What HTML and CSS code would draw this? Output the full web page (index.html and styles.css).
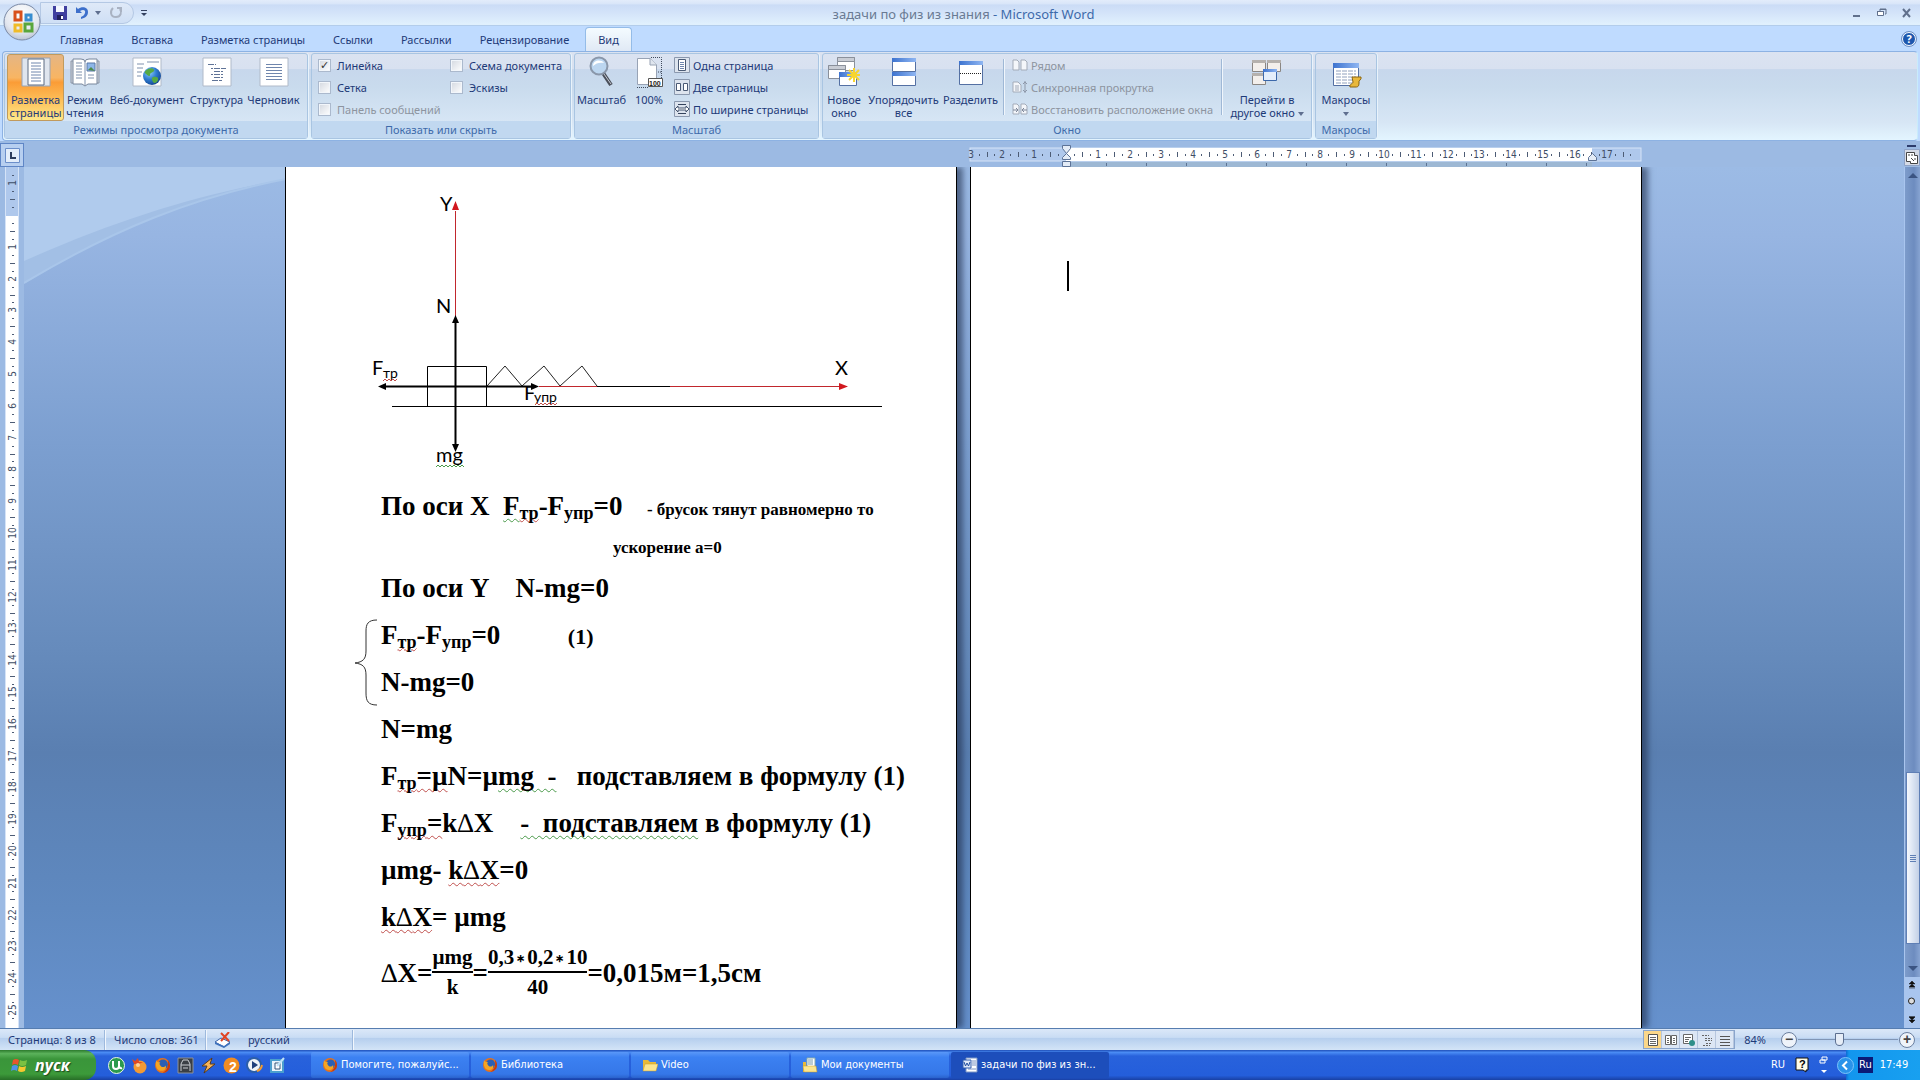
FILE: index.html
```html
<!DOCTYPE html>
<html lang="ru">
<head>
<meta charset="utf-8">
<title>задачи по физ из знания - Microsoft Word</title>
<link rel="stylesheet" href="styles.css">
</head>
<body>
<svg class="defs" aria-hidden="true">
  <defs>
    <linearGradient id="blueBar" x1="0" y1="0" x2="1" y2="0"><stop offset="0" stop-color="#3d73cf"/><stop offset="1" stop-color="#8fb6f2"/></linearGradient>
    <radialGradient id="globe" cx=".35" cy=".3" r=".8"><stop offset="0" stop-color="#8fd0ff"/><stop offset=".5" stop-color="#2d7ad0"/><stop offset="1" stop-color="#123f86"/></radialGradient>
    <radialGradient id="orb" cx=".5" cy=".3" r=".8"><stop offset="0" stop-color="#fff"/><stop offset=".6" stop-color="#e3e7ef"/><stop offset="1" stop-color="#a9b4c8"/></radialGradient>
    <symbol id="firefox" viewBox="0 0 16 16"><circle cx="8" cy="8" r="7" fill="#e8731a"/><circle cx="8.500" cy="7" r="4.600" fill="#2b5fb4"/><path d="M2 3c1 2 2 2 4 2-1 1-1 2 0 3 1 2 4 2 5 0 1 3-1 5-4 5-4 0-6-4-5-10z" fill="#f5a623"/><path d="M13 3c2 2 3 6 1 9-2 2-4 3-6 3 4-2 6-6 5-12z" fill="#c43b12"/></symbol>
    <symbol id="page-pair" viewBox="0 0 16 12"><path d="M1 1h4l2 2v8H1zM9 1h4l2 2v8H9z" fill="#f4f6fa" stroke="#a3abb8"/></symbol>
  </defs>
</svg>

<div class="app">
  <header class="titlebar">
    <button class="office" aria-label="Office">
      <svg viewBox="0 0 38 42" width="38" height="42"><circle cx="19" cy="21" r="18" fill="url(#orb)" stroke="#7b8aa6"/><g fill="none" stroke-width="3"><path d="M18 11h-6v8h6z" stroke="#d8501c"/><path d="M23 14h5v5h-5z" stroke="#3a8ed0"/><path d="M12 24h6v6h-6z" stroke="#f0bb28"/><path d="M22 23h7v7h-7z" stroke="#59a63b"/></g></svg>
    </button>
    <div class="quick">
      <button aria-label="Сохранить"><svg width="14" height="14" viewBox="0 0 14 14"><path d="M0 0h14v14H1l-1-1z" fill="#3f3f9f"/><path d="M3 0h8v6H3z" fill="#f4f7ff"/><path d="M4 9h6v5H4z" fill="#20205c"/><path d="M8 10h2v3H8z" fill="#fff"/></svg></button>
      <button aria-label="Отменить"><svg width="14" height="13" viewBox="0 0 14 13"><path d="M1 1v6h6L5 5c3-2 6-1 5 2-.500 2-2 3-4 4v2c4-1 7-3 7-7 0-5-6-6-10-3z" fill="#3d6fcb"/></svg></button>
      <span class="caret"></span>
      <button aria-label="Повторить"><svg width="14" height="13" viewBox="0 0 14 13"><path d="M4 2C1 5 1 11 7 11c5 0 6-5 4-8M8 2h4v4" fill="none" stroke="#a9b2c2" stroke-width="2"/></svg></button>
    </div>
    <span class="more"><i></i><b class="caret"></b></span>
    <h1><span>задачи по физ из знания</span> - Microsoft Word</h1>
    <div class="winctl">
      <button aria-label="Свернуть"><svg width="10" height="10"><path d="M1 7h7v2H1z" fill="#60708c"/></svg></button>
      <button aria-label="Восстановить"><svg width="10" height="10"><path d="M3 3V1h6v5H8" fill="none" stroke="#60708c"/><path d="M.500 3.500h6v4h-6z" fill="#fff" stroke="#60708c"/><path d="M0 3h7v1H0zM3 1h6v1H3z" fill="#60708c"/></svg></button>
      <button aria-label="Закрыть"><svg width="10" height="10"><path d="M1 1l7 8M8 1L1 9" stroke="#60708c" stroke-width="2"/></svg></button>
    </div>
  </header>

  <nav class="tabs">
    <a href="#">Главная</a><a href="#">Вставка</a><a href="#">Разметка страницы</a><a href="#">Ссылки</a><a href="#">Рассылки</a><a href="#">Рецензирование</a><a href="#" class="active">Вид</a>
    <button class="help" aria-label="Справка">?</button>
  </nav>

  <section class="ribbon">
    <div class="group g-views">
      <div class="tools">
        <button class="big on w-58"><svg width="32" height="32" viewBox="0 0 32 32"><path d="M2 2h28v28H2z" fill="#dfe5ee" stroke="#9aa4b4"/><path d="M8 3h16v26H8z" fill="#fff" stroke="#5d6a80"/><path d="M11 7h10M11 10h10M11 13h10M11 16h10M11 19h10M11 22h10M11 25h10" stroke="#6f86ad"/></svg><span>Разметка<br>страницы</span></button>
        <button class="big w-42"><svg width="32" height="32" viewBox="0 0 32 32"><path d="M2 5h3v22H2zM27 5h3v22h-3z" fill="#cfd5df" stroke="#8b95a5"/><path d="M4 3h8q4 0 4 3 0-3 4-3h8v25h-9l-3 2-3-2H4z" fill="#fff" stroke="#79879c"/><path d="M16 6v23M7 7h6M7 10h6M7 13h6M7 16h6M7 19h6M7 22h6M19 19h6M19 22h6" stroke="#7f91ad"/><path d="M18 7h8v8h-8z" fill="#8db6e8" stroke="#5877a8"/><path d="M19 14l3-3 4 4z" fill="#4d8a4b"/></svg><span>Режим<br>чтения</span></button>
        <button class="big w-82"><svg width="32" height="32" viewBox="0 0 32 32"><path d="M2 2h28v28H2z" fill="#fff" stroke="#b0bac9"/><path d="M6 8h7M6 12h6M6 16h5M6 20h4M16 6h12" stroke="#7f91ad"/><circle cx="21" cy="20" r="9" fill="url(#globe)"/><path d="M17 13c4-2 7 0 6 2s-4 1-4 4-4-1-5-2 1-3 3-4zM22 21c3-1 6 0 5 3s-4 4-5 2-2-4 0-5z" fill="#56a944"/></svg><span>Веб-документ</span></button>
        <button class="big w-58"><svg width="32" height="32" viewBox="0 0 32 32"><path d="M2 2h28v28H2z" fill="#fff" stroke="#b0bac9"/><path d="M7 8.500h8M10 12.500h2M13 12.500h12M13 15.500h9M10 18.500h2M13 18.500h9M13 21.500h9M11 24.500h10" stroke="#5f7397" stroke-dasharray="6 1"/></svg><span>Структура</span></button>
        <button class="big w-58"><svg width="32" height="32" viewBox="0 0 32 32"><path d="M2 2h28v28H2z" fill="#fff" stroke="#b0bac9"/><path d="M8 8.500h16M8 11.500h16M8 14.500h16M8 17.500h16M8 20.500h16M8 23.500h16" stroke="#6f86ad"/></svg><span>Черновик</span></button>
      </div>
      <h2>Режимы просмотра документа</h2>
    </div>
    <div class="group g-show">
      <div class="tools checks">
        <div class="col">
          <label><input type="checkbox" checked>Линейка</label>
          <label><input type="checkbox">Сетка</label>
          <label class="off"><input type="checkbox" disabled>Панель сообщений</label>
        </div>
        <div class="col">
          <label><input type="checkbox">Схема документа</label>
          <label><input type="checkbox">Эскизы</label>
        </div>
      </div>
      <h2>Показать или скрыть</h2>
    </div>
    <div class="group g-zoom">
      <div class="tools">
        <button class="big w-53"><svg width="32" height="32" viewBox="0 0 32 32"><path d="M17 17l8 12" stroke="#4a4f5a" stroke-width="4"/><path d="M18 18l7 10" stroke="#c5cad2" stroke-width="1"/><circle cx="13" cy="10" r="8.500" fill="#bcd6f0" stroke="#8a97aa" stroke-width="2"/><path d="M7 10c0-6 8-7 11-3-4-1-8 0-11 3z" fill="#fff"/></svg><span>Масштаб</span></button>
        <button class="big w-42"><svg width="32" height="32" viewBox="0 0 32 32"><path d="M4.500 2.500h13l6 6v20h-19z" fill="#fff" stroke="#98a3b5"/><path d="M17 2v7h7" fill="#dfe5ee" stroke="#98a3b5"/><path d="M18 1.500h10.500V22M28 16h-4M4 31.500h12" fill="none" stroke="#3f4a5c" stroke-dasharray="1 1"/><path d="M15.500 22.500h14v8h-14z" fill="#fff" stroke="#555"/><text x="16" y="30" class="tiny">100</text></svg><span>100%</span></button>
        <div class="rows">
          <button><svg width="16" height="16" viewBox="0 0 16 16"><path d="M.500.500h15v15H.500z" fill="#dde4ee" stroke="#8a98ae"/><path d="M4.500 2.500h7v11h-7z" fill="#fff" stroke="#4a5a75"/><path d="M6 5.500h4M6 7.500h4M6 9.500h4M6 11.500h4" stroke="#6f86ad"/></svg>Одна страница</button>
          <button><svg width="16" height="16" viewBox="0 0 16 16"><path d="M.500.500h15v15H.500z" fill="#dde4ee" stroke="#8a98ae"/><path d="M2.500 4.500h4v7h-4zM9.500 4.500h4v7h-4z" fill="#fff" stroke="#4a5a75"/></svg>Две страницы</button>
          <button><svg width="16" height="16" viewBox="0 0 16 16"><path d="M.500.500h15v15H.500z" fill="#dde4ee" stroke="#8a98ae"/><path d="M4 3.500h8M4 12.500h8" stroke="#33425c"/><path d="M1 8l3-3v2h8V5l3 3-3 3V9H4v2z" fill="#fff" stroke="#44546f"/></svg>По ширине страницы</button>
        </div>
      </div>
      <h2>Масштаб</h2>
    </div>
    <div class="group g-window">
      <div class="tools">
        <button class="big w-42"><svg width="32" height="32" viewBox="0 0 32 32"><g stroke="#8a909b"><path d="M9.500 1.500h17v13h-17z" fill="#fff"/><path d="M9.500 1.500h17v4h-17z" fill="#c9cdd5"/><path d="M.500 9.500h17v13H.500z" fill="#fff"/><path d="M.500 9.500h17v4H.500z" fill="#c9cdd5"/><path d="M11.500 16.500h17v13h-17z" fill="#fff" stroke="#5470a3"/></g><path d="M11 16h18v5H11z" fill="url(#blueBar)"/><path d="M26 12v14M19 19h14M21 14l10 10M31 14L21 24" stroke="#f7d52e" stroke-width="2"/></svg><span>Новое<br>окно</span></button>
        <button class="big w-77"><svg width="32" height="32" viewBox="0 0 32 32"><path d="M4.500 2.500h23v13h-23zM4.500 16.500h23v13h-23z" fill="#fff" stroke="#5470a3"/><path d="M4 2h24v4H4zM4 16h24v4H4z" fill="url(#blueBar)"/></svg><span>Упорядочить<br>все</span></button>
        <button class="big w-58"><svg width="32" height="32" viewBox="0 0 32 32"><path d="M4.500 5.500h23v23h-23z" fill="#fff" stroke="#5470a3"/><path d="M4 5h24v4H4z" fill="url(#blueBar)"/><path d="M5 17.500h22" stroke="#222" stroke-dasharray="1 1"/></svg><span>Разделить</span></button>
        <i class="sep"></i>
        <div class="rows off">
          <button disabled><svg width="16" height="12"><use href="#page-pair"/></svg>Рядом</button>
          <button disabled><svg width="16" height="12" viewBox="0 0 16 12"><path d="M1 1h5l3 3v7H1z" fill="#f4f6fa" stroke="#a3abb8"/><path d="M3 5h4M3 7h4M3 9h4" stroke="#a3abb8"/><path d="M13 0v12M11 3l2-2 2 2M11 9l2 2 2-2" fill="none" stroke="#8d97a8"/></svg>Синхронная прокрутка</button>
          <button disabled><svg width="16" height="12" viewBox="0 0 16 12"><path d="M1 1h4l2 2v8H1zM9 1h4l2 2v8H9z" fill="#f4f6fa" stroke="#a3abb8"/><path d="M1 7h5M4 5l2 2-2 2M15 7h-5M12 5l-2 2 2 2" fill="none" stroke="#7c8698"/></svg>Восстановить расположение окна</button>
        </div>
        <i class="sep"></i>
        <button class="big w-80"><svg width="32" height="32" viewBox="0 0 32 32"><g fill="#f3efec" stroke="#8a8683"><path d="M1.500 4.500h13v11h-13zM16.500 4.500h13v11h-13zM1.500 17.500h13v11h-13z"/></g><path d="M1 4h14v3H1zM16 4h14v3H16zM1 17h14v3H1z" fill="#b5b1ae"/><path d="M12.500 13.500h13v11h-13z" fill="#e4eefb" stroke="#3c68aa"/><path d="M12 13h14v3H12z" fill="url(#blueBar)"/></svg><span>Перейти в<br>другое окно <b class="caret"></b></span></button>
      </div>
      <h2>Окно</h2>
    </div>
    <div class="group g-macro">
      <div class="tools">
        <button class="big w-53"><svg width="32" height="32" viewBox="0 0 32 32"><path d="M3.500 7.500h25v22h-25z" fill="#fff" stroke="#5470a3"/><path d="M3 7h26v5H3z" fill="url(#blueBar)"/><path d="M6 15h20M6 18h20M6 21h20M6 24h20M6 27h20" stroke="#8fa0bd" stroke-dasharray="5 1"/><path d="M22 21h9c1 3-3 3-2 6 0 4-2 4-3 4h-6c-1-3 3-3 3-5z" fill="#e9b83a" stroke="#8a6512"/></svg><span>Макросы<br><b class="caret"></b></span></button>
      </div>
      <h2>Макросы</h2>
    </div>
  </section>

  <div class="rulerrow">
    <button class="tabstop" aria-label="Табуляция"><svg width="15" height="15"><path d="M.500.500h14v14H.500z" fill="#e3edfa" stroke="#6c8fca"/><path d="M5 4h2v5h4v2H5z" fill="#2c3c5c"/></svg></button>
    <div class="spread">
      <div class="slot"></div>
      <div class="slot"><svg id="hruler" width="672" height="24"></svg></div>
    </div>
    <button class="toggle" aria-label="Линейка"><svg width="16" height="24"><path d="M3 2h9v2H3z" fill="#2c3c6c"/><path d="M.500 6.500h15v16H.500z" fill="#d6dbe6" stroke="#8fa3c6"/><path d="M2.500 9.500h8v3h3v8h-7v-2h-4zM5 11v2M8 11v2M7 15l3 3M11 15v2" fill="#fff" stroke="#444"/></svg></button>
  </div>

  <main class="work">
    <div class="vruler"><svg id="vruler" width="24" height="861"></svg></div>
    <div class="canvas">
      <svg class="swoosh" viewBox="0 0 262 120" width="262" height="120"><path d="M0 0h262v12C170 30 90 62 0 117z" fill="#a2bfe5"/><path d="M0 0h262v12C170 28 90 54 0 94z" fill="#b0cbed"/><path d="M0 116C90 62 170 30 262 12" fill="none" stroke="#a9c6ea" stroke-width="2"/></svg>
      <div class="spread">
        <article class="page">
          <svg class="diagram" width="670" height="316" viewBox="0 0 670 316">
            <path d="M169.500 44V150M253 219.500h300" stroke="#c1272d" fill="none"/>
            <path d="M166 43l3.500-9 3.500 9zM553 216l9 3.500-9 3.500z" fill="#d1181f"/>
            <path d="M141.500 199.500h59v40h-59zM106 239.500h490M311 219.500h73" fill="none" stroke="#000"/>
            <path d="M201 219l18-20 17 20 22-20 16 20 22-20 15 20" fill="none" stroke="#222"/>
            <path d="M169.500 153v126M96 219.500h150" stroke="#000" stroke-width="2"/>
            <path d="M166 156l3.500-8 3.500 8zM166 277l3.500 8 3.500-8zM100 216l-8 3.500 8 3.500zM245 216l8 3.500-8 3.500z" fill="#000"/>
            <g class="dlabel">
              <text x="154" y="44">Y</text><text x="150" y="146">N</text><text x="549" y="208">X</text>
              <text x="86" y="208">F</text><text x="97" y="211" class="dsub">тр</text>
              <text x="238" y="233">F</text><text x="248" y="235" class="dsub">упр</text>
              <text x="150" y="295">mg</text>
            </g>
            <path d="M97 214l2-2 2 2 2-2 2 2 2-2 2 2 2-2M249 238l2-2 2 2 2-2 2 2 2-2 2 2 2-2 2 2 2-2 2 2 2-2" fill="none" stroke="#c0504d"/>
            <path d="M150 300l2-2 2 2 2-2 2 2 2-2 2 2 2-2 2 2 2-2 2 2 2-2 2 2 2-2 2 2" fill="none" stroke="#4a9a4a"/>
          </svg>
          <div class="text">
            <p>По оси X  <span class="gram">F</span><span class="spell"><sub>тр</sub></span>-F<sub>упр</sub>=0   <small> - брусок тянут равномерно то</small></p>
            <p class="note">ускорение a=0</p>
            <p class="axis">По оси Y    N-mg=0</p>
            <div class="system">
              <svg class="brace" width="24" height="88" viewBox="0 0 24 88"><path d="M23 1C14 1 12 5 12 12v20c0 8-3 11-11 12 8 1 11 4 11 12v18c0 8 2 12 11 12" fill="none" stroke="#333"/></svg>
              <p>F<span class="spell"><sub>тр</sub></span>-F<sub>упр</sub>=0          <span class="ref">(1)</span></p>
              <p>N-mg=0</p>
            </div>
            <p>N=mg</p>
            <p>F<span class="spell"><sub>тр</sub>=µ</span>N=µ<span class="gram">mg  -</span>   подставляем в формулу (1)</p>
            <p>F<span class="spell"><sub>упр</sub>=</span>k<i>∆</i>X    <span class="gram">-  подставляем</span> в формулу (1)</p>
            <p>µmg- <span class="spell">k<i>∆</i>X</span>=0</p>
            <p><span class="spell">k<i>∆</i>X</span>= µmg</p>
            <p class="formula"><i>∆</i>X=<span class="frac"><span>µmg</span><span>k</span></span>=<span class="frac"><span>0,3<em>∗</em>0,2<em>∗</em>10</span><span>40</span></span>=0,015м=1,5см</p>
          </div>
        </article>
        <article class="page"><div class="cursor"></div></article>
      </div>
    </div>
    <div class="scroll">
      <div class="track">
        <i class="arrow up"></i>
        <div class="thumb"><i></i></div>
        <i class="arrow down"></i>
      </div>
      <svg width="16" height="51" viewBox="0 0 16 51"><path d="M5 7l3-3 3 3zM5 10l3-3 3 3zM5 11h6" fill="#111" stroke="#111" stroke-width=".500"/><circle cx="7.500" cy="24" r="3" fill="#ddd" stroke="#222"/><path d="M5 40h6l-3 3zM5 43h6l-3 3zM5 39.500h6" fill="#111" stroke="#111" stroke-width=".500"/></svg>
    </div>
  </main>

  <footer class="status">
    <span class="s-page">Страница: 8 из 8</span>
    <span class="s-words">Число слов: 361</span>
    <span class="s-lang"><svg width="20" height="16" viewBox="0 0 20 16"><path d="M2 10l6-4 9 4-6 5z" fill="#fff" stroke="#3c63a6"/><path d="M2 10v2l9 4 6-4v-2l-6 4z" fill="#3f72bd"/><path d="M8 1l8 8M16 0L8 9" stroke="#e04424" stroke-width="2"/></svg>русский</span>
    <div class="views">
      <button class="on" aria-label="Разметка"><svg width="12" height="12"><path d="M1.500.500h9v11h-9z" fill="#fff" stroke="#555"/><path d="M3 3.500h6M3 5.500h6M3 7.500h6M3 9.500h6" stroke="#666"/></svg></button>
      <button aria-label="Чтение"><svg width="12" height="12"><path d="M.500 1.500h5v9h-5zM6.500 1.500h5v9h-5z" fill="#fff" stroke="#666"/><path d="M2 4.500h2M2 6.500h2M2 8.500h2M8 4.500h2M8 6.500h2M8 8.500h2" stroke="#666"/></svg></button>
      <button aria-label="Веб"><svg width="12" height="12"><path d="M.500.500h9v9h-9z" fill="#fff" stroke="#666"/><path d="M2 3.500h6M2 5.500h4M2 7.500h3" stroke="#666"/><circle cx="9" cy="9" r="3" fill="#2f8f8a"/></svg></button>
      <button aria-label="Структура"><svg width="12" height="12"><path d="M1 1.500h7M4 4.500h7M4 6.500h7M5 9.500h6M2 11.500h7" stroke="#666" stroke-dasharray="2 1"/></svg></button>
      <button aria-label="Черновик"><svg width="12" height="12"><path d="M1 2.500h10M1 5.500h10M1 8.500h10M1 11.500h10" stroke="#555"/></svg></button>
    </div>
    <span class="pct">84%</span>
    <button class="round" aria-label="Уменьшить">−</button>
    <input class="zoomer" type="range" min="0" max="100" value="41" aria-label="Масштаб">
    <button class="round" aria-label="Увеличить">+</button>
  </footer>

  <div class="taskbar">
    <button class="start"><svg width="18" height="18" viewBox="0 0 18 18"><path d="M2 4q3-2 6 0L7 9Q4 7 1 9z" fill="#e8552c"/><path d="M9 4q3 2 7 0l-1 5q-4 2-7 0z" fill="#7bc142"/><path d="M1 10q3-2 6 0l-1 5q-3-2-6 0z" fill="#4f92e8"/><path d="M8 10q3 2 7 0l-1 5q-4 2-7 0z" fill="#f6c82f"/></svg>пуск</button>
    <div class="launch">
      <button aria-label="uTorrent"><svg width="17" height="17" viewBox="0 0 17 17"><circle cx="8.500" cy="8.500" r="8" fill="#2c9a4c" stroke="#e8f5e8"/><path d="M5 4v5q0 3 3 3t3-3V4M11 9q1 3 3 2" fill="none" stroke="#fff" stroke-width="2"/></svg></button>
      <button aria-label="Плеер"><svg width="17" height="17" viewBox="0 0 17 17"><circle cx="9" cy="10" r="6.500" fill="#f39a34"/><path d="M1 2l3 2 3-3 1 4 4 0-4 2-5 0z" fill="#e04a22"/><circle cx="7" cy="8" r="2" fill="#fbd49c"/></svg></button>
      <button aria-label="Firefox"><svg width="17" height="17"><use href="#firefox"/></svg></button>
      <button aria-label="Игра"><svg width="17" height="17" viewBox="0 0 17 17"><path d="M1 1h15v15H1z" fill="#3a3f45" stroke="#8d9299"/><path d="M4 14V7l2-4h5l2 4v7M4 8h9M6 11h5" fill="none" stroke="#c9cdd2"/></svg></button>
      <button aria-label="Winamp"><svg width="17" height="17" viewBox="0 0 17 17"><path d="M12 1L2 9h5l-3 7L15 7h-5z" fill="#f5b45b" stroke="#5b3a18"/></svg></button>
      <button aria-label="2ГИС"><svg width="17" height="17" viewBox="0 0 17 17"><circle cx="8.500" cy="8.500" r="8" fill="#f08c22"/><text x="6" y="15" class="two">2</text></svg></button>
      <button aria-label="Media Player"><svg width="17" height="17" viewBox="0 0 17 17"><circle cx="8" cy="8" r="7" fill="#eef3f8" stroke="#2d5fa8" stroke-width="2"/><path d="M6 4v8l6-4z" fill="#1e3f7c"/><path d="M11 14q4-1 5-6" stroke="#f29a2e" fill="none" stroke-width="2"/></svg></button>
      <button aria-label="Рабочий стол"><svg width="17" height="17" viewBox="0 0 17 17"><path d="M2 3h12v12H2z" fill="#e8f4fb" stroke="#4a9fce" stroke-width="2"/><path d="M6 6h5v6H6z" fill="#fff" stroke="#357"/><path d="M8 9l7-8" stroke="#bfe3f7" stroke-width="2"/></svg></button>
    </div>
    <div class="tasks">
      <button><svg width="16" height="16"><use href="#firefox"/></svg>Помогите, пожалуйс...</button>
      <button><svg width="16" height="16"><use href="#firefox"/></svg>Библиотека</button>
      <button><svg width="16" height="16" viewBox="0 0 16 16"><path d="M1 3h5l2 2h6v9H1z" fill="#e8b93a"/><path d="M3 7h13l-2 7H1z" fill="#fbe58f" stroke="#c79a25" stroke-width=".500"/></svg>Video</button>
      <button><svg width="16" height="16" viewBox="0 0 16 16"><path d="M1 5h3v10H1z" fill="#e8b93a"/><path d="M5 1h8v9H5z" fill="#fff" stroke="#8aa"/><path d="M6 3h5M6 5h5M6 7h5" stroke="#79a"/><path d="M1 9h13l1 6H2z" fill="#fbe58f" stroke="#c79a25" stroke-width=".500"/></svg>Мои документы</button>
      <button class="current"><svg width="16" height="16" viewBox="0 0 16 16"><path d="M4 1h11v14H4z" fill="#fff" stroke="#7b94c4"/><path d="M10 4h4M10 6h4M10 8h4M6 12h8" stroke="#7b94c4"/><path d="M1 3h8v8H1z" fill="#dfe8f8" stroke="#335fae"/><path d="M2 5l1.500 4L5 6l1.500 3L8 5" fill="none" stroke="#1f4d9f"/></svg>задачи по физ из зн...</button>
    </div>
    <div class="langs"><span>RU</span>
      <svg width="14" height="16" viewBox="0 0 14 16"><path d="M1 1h12v12h-2v2l-3-2H1z" fill="#fffde8" stroke="#111"/><text x="4" y="11" class="qm">?</text></svg>
      <svg width="9" height="18" viewBox="0 0 9 18"><path d="M3 1h5v3H3zM1 4h5v3H1z" fill="#2b66d8" stroke="#fff"/><path d="M2 14h6l-3 3z" fill="#fff"/></svg>
    </div>
    <div class="tray">
      <button class="chev" aria-label="Показать значки"><svg width="17" height="17" viewBox="0 0 17 17"><circle cx="8.500" cy="8.500" r="8" fill="#2a93ea" stroke="#7cc4fa"/><path d="M10 4.500l-4 4 4 4" fill="none" stroke="#fff" stroke-width="2"/></svg></button>
      <span class="ru">Ru</span><span>17:49</span>
    </div>
  </div>
</div>
<script src="rulers.js"></script>
</body>
</html>
```
FILE: styles.css
```css
* { box-sizing: border-box; }
body {
  margin: 0;
  font: 11px/13px "Noto Sans", "Open Sans", sans-serif;
  color: #1e3a78;
}
button {
  border: 0;
  padding: 0;
  background: none;
  font: inherit;
  color: inherit;
}
a { color: inherit; text-decoration: none; }
h1, h2, p { margin: 0; font-weight: normal; }
svg { flex: none; }
.defs { position: absolute; width: 0; height: 0; }
.app { display: flex; flex-direction: column; height: 100vh; overflow: hidden; background: #bfdbff; }

.caret {
  display: inline-block;
  border: 3px solid transparent;
  border-top: 4px solid #5f6f8f;
  border-bottom: 0;
  vertical-align: middle;
}

/* Title bar */
.titlebar {
  display: flex;
  align-items: center;
  position: relative;
  height: 26px;
  flex: none;
  padding-right: 8px;
  background: linear-gradient(#e3ecfb 0, #d9e6f9 15%, #cbdcf6 20%, #d3e3f9 50%, #e0f0fd 95%);
  border-bottom: 1px solid #b3cdeb;
}
.office { position: absolute; left: 3px; top: 1px; z-index: 2; height: 42px; }
.quick {
  display: flex;
  align-items: center;
  gap: 8px;
  width: 94px;
  height: 22px;
  margin-left: 40px;
  padding-left: 12px;
  border: 1px solid #b4c8e4;
  border-radius: 0 12px 12px 0;
  background: linear-gradient(#dfe9f8, #cfdff5);
}
.quick button { display: flex; }
.quick .caret { margin-left: -2px; }
.more { display: flex; flex-direction: column; align-items: center; gap: 2px; margin-left: 7px; }
.more i { width: 6px; height: 1px; background: #33415f; }
.more .caret { border-top-color: #33415f; border-top-width: 3px; }
.titlebar h1 {
  flex: 1;
  margin-right: 72px;
  text-align: center;
  font-size: 13px;
  line-height: 18px;
  padding-top: 3px;
  color: #3e6aaa;
}
.titlebar h1 span { color: #697a93; }
.winctl { display: flex; gap: 15px; }
.winctl button { display: flex; }

/* Tabs */
.tabs { display: flex; height: 25px; flex: none; padding: 1px 4px 0 46px; }
.tabs a { padding: 6px 14px 0; height: 24px; }
.tabs .active {
  margin-left: 2px;
  padding: 5px 12px 0;
  border: 1px solid #94bce8;
  border-bottom: 0;
  border-radius: 4px 4px 0 0;
  background: linear-gradient(#f4fbff, #e0e9f5);
}
.help {
  width: 14px;
  height: 14px;
  margin: 5px 0 0 auto;
  border: 1px solid #fff;
  border-radius: 50%;
  outline: 1px solid #6d8fc4;
  background: #1d57ae;
  color: #fff;
  font-weight: bold;
  line-height: 12px;
}

/* Ribbon */
.ribbon {
  display: flex;
  gap: 3px;
  flex: none;
  height: 90px;
  margin: 0 2px;
  padding: 1px;
  border: 1px solid #8db2e3;
  border-right-color: #c9ecfb;
  border-radius: 4px;
  background: linear-gradient(#dbe3f1 0, #d8e1f0 19%, #c7d7ec 20%, #c9dbed 40%, #d7e6f5 80%, #e3f5ff);
}
.group {
  display: flex;
  flex-direction: column;
  border: 1px solid #a9c5e2;
  border-radius: 3px;
  box-shadow: 1px 0 0 #e9f3fb;
}
.g-views { width: 304px; }
.g-show { width: 260px; }
.g-zoom { width: 245px; }
.g-window { width: 490px; }
.g-macro { width: 62px; }
.group h2 {
  flex: none;
  height: 17px;
  font-size: 11px;
  line-height: 18px;
  text-align: center;
  color: #3e6aaa;
  background: #c1d8f0;
}
.tools { display: flex; flex: 1; padding: 0 2px; }
.g-window .tools, .g-zoom .tools { padding-left: 0; }
.g-macro .tools { justify-content: center; }
.big {
  display: flex;
  flex-direction: column;
  align-items: center;
  height: 67px;
  padding-top: 2px;
  white-space: nowrap;
  border-radius: 3px;
}
.big span { margin-top: 5px; line-height: 13px; }
.w-42 { width: 42px; }
.w-53 { width: 53px; }
.w-58 { width: 57px; }
.w-77 { width: 77px; }
.w-80 { width: 80px; }
.w-82 { width: 82px; }
.big.on {
  border: 1px solid #c19a5c;
  padding-top: 1px;
  background: linear-gradient(#e5b583, #f8b563 35%, #fb9c36 42%, #fdc05a 70%, #ffe889);
}
.checks { padding: 0 6px; }
.checks .col { width: 132px; flex: none; display: flex; flex-direction: column; }
.checks label { display: flex; align-items: center; gap: 6px; height: 22px; white-space: nowrap; }
.checks input {
  appearance: none;
  display: grid;
  place-items: center;
  width: 13px;
  height: 13px;
  margin: 0;
  border: 1px solid #abb9cd;
  background: linear-gradient(135deg, #d3d8e0, #fff);
  outline: 1px solid #f2f6fb;
  outline-offset: -2px;
}
.checks input:checked::after { content: "✓"; color: #333; font: bold 11px/11px "DejaVu Sans", sans-serif; }
.off { color: #8d949f; }
.rows { display: flex; flex-direction: column; padding-left: 4px; }
.rows.off { padding: 0 4px 0 3px; }
.rows button { display: flex; align-items: center; gap: 3px; height: 22px; white-space: nowrap; }
.sep { width: 1px; height: 56px; margin: 5px 5px 0 4px; background: #9fb8d6; box-shadow: 1px 0 0 #f0f6fc; }
.tiny { font: bold 7px "Liberation Sans", sans-serif; fill: #222; }

/* Rulers */
.rulerrow { display: flex; flex: none; height: 26px; padding-top: 2px; background: #9cbae3; }
.tabstop { display: grid; place-items: center; width: 24px; height: 24px; border: 1px solid #5f86c6; background: #b7cff0; }
.toggle { width: 16px; height: 24px; display: flex; }
.spread { flex: 1; display: flex; justify-content: center; gap: 13px; padding-right: 1px; }
.slot { width: 672px; height: 24px; }
#hruler { overflow: visible; }
.rulernum { font: 10px "DejaVu Sans Condensed", "DejaVu Sans", sans-serif; fill: #3e4d66; text-anchor: middle; }

/* Workspace */
.work { display: flex; flex: 1; min-height: 0; }
.vruler { width: 24px; flex: none; overflow: hidden; background: #9cbae3; }
.canvas {
  display: flex;
  flex: 1;
  position: relative;
  overflow: hidden;
  background: linear-gradient(#9cbbe5 0, #97b5e2 8%, #7c9fd0 32%, #668bbc 56%, #5a7fb1 68%, #5f89c0 86%, #6691cd);
}
.swoosh { position: absolute; left: 0; top: 0; }
.page {
  position: relative;
  width: 672px;
  border: 1px solid #000;
  border-width: 0 1px;
  background: #fff;
  box-shadow: 6px 0 6px rgba(30, 45, 75, .600);
  color: #000;
}
.page + .page { padding: 94px 0 0 96px; }
.diagram { display: block; }
.dlabel { font: 20px Lato, "Open Sans", sans-serif; }
.dsub { font-size: 14px; }
.text { padding-left: 95px; font: bold 27px/47px "Liberation Serif", serif; }
.text p { font-weight: bold; white-space: pre; }
.text sub { font-size: 18px; line-height: 0; vertical-align: -4px; }
.text small { font-size: 17px; line-height: 16px; }
.text i { font-weight: normal; font-style: normal; }
.text .note { padding-left: 232px; font-size: 17px; line-height: 35px; }
.text .axis { line-height: 47px; }
.text .ref { font-size: 22px; line-height: 22px; }
.spell, .gram { text-decoration: underline wavy 1px #c0504d; text-decoration-skip-ink: none; text-underline-offset: 3px; }
.gram { text-decoration-color: #4a9a4a; }
.system { position: relative; }
.brace { position: absolute; left: -27px; top: 7px; }
.formula { display: flex; align-items: center; height: 64px; }
.frac { display: flex; flex-direction: column; text-align: center; font-size: 21px; line-height: 29px; }
.frac span:first-child { border-bottom: 2px solid #000; line-height: 27px; }
.frac em { margin: 0 2px; font-size: 11px; line-height: 11px; font-style: normal; vertical-align: 2px; }
.cursor { width: 2px; height: 30px; background: #000; }

/* Scroll bar */
.scroll { display: flex; flex-direction: column; width: 16px; background: #a9c5ee; }
.track { display: flex; flex-direction: column; flex: 1; align-items: center; margin-left: 1px; padding: 6px 0; background: linear-gradient(90deg, #7d9ccb, #6d8cbf 60%, #87a4d2); }
.arrow { border: 5px solid transparent; }
.up { border-bottom-color: #3b5482; border-top: 0; }
.down { border-top-color: #3b5482; border-bottom: 0; }
.thumb {
  display: grid;
  place-items: center;
  width: 14px;
  height: 172px;
  margin: auto 0 22px;
  border: 1px solid #5f7fb5;
  background: linear-gradient(90deg, #f5f8fd, #dbe4f2 50%, #c3d0e6);
}
.thumb i { width: 6px; height: 7px; background: repeating-linear-gradient(#5f7fb5 0 1px, transparent 1px 2px); }

/* Status bar */
.status {
  display: flex;
  align-items: center;
  flex: none;
  height: 22px;
  padding-right: 5px;
  border-top: 1px solid #567db0;
  background: linear-gradient(#dbe8f8, #c9dcf4 40%, #b6cfee 45%, #d3e4f7);
}
.status > span { display: flex; align-items: center; gap: 15px; height: 20px; white-space: nowrap; }
.s-page { width: 105px; padding-left: 8px; }
.s-words { width: 101px; padding-left: 9px; }
.s-lang { width: 147px; padding-left: 7px; }
.s-page, .s-words, .s-lang { border-right: 1px solid #9db9dd; box-shadow: 1px 0 0 #f2f7fd; }
.views { display: flex; margin-left: auto; border: 1px solid #8aa5cc; background: #dce6f4; }
.views button { display: grid; place-items: center; width: 18px; height: 17px; border-right: 1px solid #b6c6de; }
.views .on { background: #fbd78a; }
.status .pct { margin: 0 15px 0 9px; }
.round {
  width: 16px;
  height: 16px;
  border: 1px solid #6b7f9f;
  border-radius: 50%;
  background: #eef3fa;
  color: #444;
  font: bold 14px/13px "Liberation Sans", sans-serif;
}
.zoomer { appearance: none; width: 100px; height: 16px; margin: 0 1px; background: linear-gradient(#7f95b5, #7f95b5) center / 100% 1px no-repeat; }
.zoomer::-webkit-slider-thumb {
  appearance: none;
  width: 9px;
  height: 13px;
  border: 1px solid #5c6f90;
  border-radius: 1px 1px 5px 5px;
  background: #e6edf7;
}

/* Taskbar */
.taskbar {
  display: flex;
  align-items: center;
  flex: none;
  height: 30px;
  font: 11px/14px "DejaVu Sans Condensed", "DejaVu Sans", sans-serif;
  color: #fff;
  background: linear-gradient(#1f4fb8 0, #4a8cf4 8%, #2862dc 20%, #245edb 85%, #1941a5);
}
.start {
  display: flex;
  align-items: center;
  gap: 6px;
  width: 96px;
  height: 30px;
  padding-left: 11px;
  border-radius: 0 12px 12px 0;
  background: linear-gradient(#2c7a2c, #5bb25b 12%, #3a953a 30%, #3c9a3a 80%, #276e27);
  font: italic bold 16px/20px "Open Sans", sans-serif;
  text-shadow: 1px 1px 1px #1d4a1d;
}
.launch { display: flex; gap: 6px; margin-left: 12px; }
.launch button, .tray button { display: flex; }
.tasks { display: flex; gap: 2px; flex: 1; margin-left: 25px; height: 26px; }
.tasks button {
  display: flex;
  align-items: center;
  gap: 3px;
  width: 158px;
  padding-left: 11px;
  border-radius: 2px;
  background: linear-gradient(#5a98f8, #3c81f2 20%, #3577e8 85%, #2a62cc);
  white-space: nowrap;
}
.tasks .current { background: #1d4ebb; }
.langs { display: flex; align-items: center; gap: 10px; margin-right: 9px; }
.tray {
  display: flex;
  align-items: center;
  gap: 4px;
  height: 30px;
  width: 83px;
  background: linear-gradient(90deg, transparent 9px, #0d6cd4 9px, #1296ee 12px, #18a0f0);
}
.ru { padding: 1px 1px; background: #0a1a78; margin-right: 3px; }
.two { font: bold 14px "Liberation Sans", sans-serif; fill: #fff; }
.qm { font: bold 11px "Liberation Sans", sans-serif; fill: #000; }
```
FILE: rulers.js
```js
const NS = "http://www.w3.org/2000/svg";
const CM = 31.8;

function add(svg, name, attrs, text) {
  const el = document.createElementNS(NS, name);
  for (const key in attrs) el.setAttribute(key, attrs[key]);
  if (text !== undefined) el.textContent = text;
  svg.appendChild(el);
}

// Quarter marks: dots at 1/4 and 3/4, a tick at 1/2, a number at each centimetre.
function marks(from, to, zero, place) {
  for (let q = from * 4; q <= to * 4; q++) {
    const pos = Math.round(zero + q * CM / 4);
    if (q === 0) continue;
    place(pos, Math.abs(q) % 4, Math.abs(q / 4));
  }
}

const h = document.getElementById("hruler");
add(h, "rect", { x: 0, y: 5, width: 671, height: 13, fill: "#afc8ec", stroke: "#d5e3f7" });
add(h, "rect", { x: 96, y: 5, width: 526, height: 13, fill: "#fff" });
add(h, "rect", { x: 96, y: 19, width: 526, height: 5, fill: "#9db8d4" });
for (let x = 136; x < 620; x += 40) add(h, "rect", { x, y: 20, width: 1, height: 3, fill: "#5d7393" });
marks(-3, 17.75, 96, (x, kind, n) => {
  if (kind === 0) add(h, "text", { x, y: 15, class: "rulernum" }, n);
  else if (kind === 2) add(h, "rect", { x, y: 9, width: 1, height: 5, fill: "#4d5c75" });
  else add(h, "rect", { x, y: 11, width: 1, height: 2, fill: "#4d5c75" });
});
add(h, "path", { d: "M92.5 2.5h8v3l-4 5-4-5zM92.5 16.500v-2l4-4 4 4v2zM92.5 18.500h8v5h-8zM618.500 17.500v-3l4-4 4 4v3z", fill: "#e3ebf6", stroke: "#5c7296" });

const v = document.getElementById("vruler");
add(v, "rect", { x: 5, y: 0, width: 14, height: 861, fill: "#d5e3f7" });
add(v, "rect", { x: 6, y: 0, width: 12, height: 49, fill: "#afc8ec" });
add(v, "rect", { x: 6, y: 49, width: 12, height: 812, fill: "#fff" });
marks(-1.25, 25.25, 48, (y, kind, n) => {
  if (kind === 0) add(v, "text", { x: 0, y: 0, transform: `translate(16 ${y}) rotate(-90)`, class: "rulernum" }, n);
  else if (kind === 2) add(v, "rect", { x: 10, y, width: 5, height: 1, fill: "#4d5c75" });
  else add(v, "rect", { x: 12, y, width: 2, height: 1, fill: "#4d5c75" });
});
```
